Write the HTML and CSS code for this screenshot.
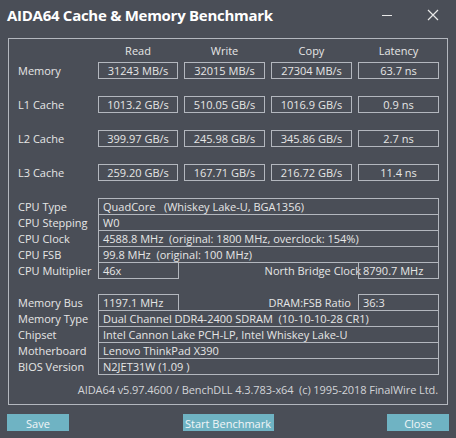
FILE: index.html
```html
<!DOCTYPE html>
<html>
<head>
<meta charset="utf-8">
<link rel="stylesheet" href="styles.css">
</head>
<body>
<div class="titlebar">
  <span class="title">AIDA64 Cache &amp; Memory Benchmark</span>
  <div class="controls">
    <svg class="ctl-min" width="12" height="12" viewBox="0 0 12 12"><line x1="1" y1="6.5" x2="11" y2="6.5" stroke="#e8e8e8" stroke-width="1"/></svg>
    <svg class="ctl-close" width="12" height="12" viewBox="0 0 12 12"><path d="M1 1 L11 11 M11 1 L1 11" stroke="#e8e8e8" stroke-width="1.2" fill="none"/></svg>
  </div>
</div>
<div class="frame">
  <div class="bench-head">
    <span></span><span>Read</span><span>Write</span><span>Copy</span><span>Latency</span>
  </div>
  <div class="bench">
    <span class="lbl">Memory</span><span class="box">31243 MB/s</span><span class="box">32015 MB/s</span><span class="box">27304 MB/s</span><span class="box">63.7 ns</span>
    <span class="lbl">L1 Cache</span><span class="box">1013.2 GB/s</span><span class="box">510.05 GB/s</span><span class="box">1016.9 GB/s</span><span class="box">0.9 ns</span>
    <span class="lbl">L2 Cache</span><span class="box">399.97 GB/s</span><span class="box">245.98 GB/s</span><span class="box">345.86 GB/s</span><span class="box">2.7 ns</span>
    <span class="lbl">L3 Cache</span><span class="box">259.20 GB/s</span><span class="box">167.71 GB/s</span><span class="box">216.72 GB/s</span><span class="box">11.4 ns</span>
  </div>
  <div class="info cpu">
    <div class="row"><span class="lbl">CPU Type</span><span class="val wide">QuadCore &nbsp; (Whiskey Lake-U, BGA1356)</span></div>
    <div class="row"><span class="lbl">CPU Stepping</span><span class="val wide">W0</span></div>
    <div class="row"><span class="lbl">CPU Clock</span><span class="val wide">4588.8 MHz &nbsp;(original: 1800 MHz, overclock: 154%)</span></div>
    <div class="row"><span class="lbl">CPU FSB</span><span class="val wide">99.8 MHz &nbsp;(original: 100 MHz)</span></div>
    <div class="row"><span class="lbl">CPU Multiplier</span><span class="val short">46x</span><span class="lbl2 nb">North Bridge Clock</span><span class="val short2">8790.7 MHz</span></div>
  </div>
  <div class="info mem">
    <div class="row"><span class="lbl">Memory Bus</span><span class="val short">1197.1 MHz</span><span class="lbl2">DRAM:FSB Ratio</span><span class="val short2">36:3</span></div>
    <div class="row"><span class="lbl">Memory Type</span><span class="val wide">Dual Channel DDR4-2400 SDRAM &nbsp;(10-10-10-28 CR1)</span></div>
    <div class="row"><span class="lbl">Chipset</span><span class="val wide">Intel Cannon Lake PCH-LP, Intel Whiskey Lake-U</span></div>
    <div class="row"><span class="lbl">Motherboard</span><span class="val wide">Lenovo ThinkPad X390</span></div>
    <div class="row"><span class="lbl">BIOS Version</span><span class="val wide">N2JET31W (1.09 )</span></div>
  </div>
  <div class="footer">AIDA64 v5.97.4600 / BenchDLL 4.3.783-x64 &nbsp;(c) 1995-2018 FinalWire Ltd.</div>
</div>
<div class="buttons">
  <button class="btn btn-save">Save</button>
  <button class="btn btn-start">Start Benchmark</button>
  <button class="btn btn-close">Close</button>
</div>
<div class="strip"></div>
</body>
</html>
```
FILE: styles.css
```css
* { box-sizing: border-box; }
html, body {
  margin: 0;
  padding: 0;
  background: #4a4e57;
  width: 456px;
  height: 438px;
  overflow: hidden;
  font-family: "Open Sans", "Noto Sans", sans-serif;
  font-size: 11px;
  color: #e6e6e6;
}
.titlebar {
  height: 38px;
  display: flex;
  align-items: flex-start;
  justify-content: space-between;
  padding: 4px 0 0 7px;
}
.title {
  font-weight: 700;
  font-size: 15px;
  line-height: 22px;
  color: #ffffff;
  letter-spacing: -0.28px;
}
.controls {
  display: flex;
  align-items: center;
  padding-top: 5px;
}
.ctl-min { margin-right: 34px; }
.ctl-close { margin-right: 17px; }
.frame {
  margin-left: 8px;
  width: 440px;
  border: 1px solid #b3b7be;
  padding: 0 8px 0 9px;
}
.bench-head, .bench {
  display: grid;
  grid-template-columns: 74px 80px 81px 81px 81px;
  column-gap: 6px;
}
.bench-head {
  margin-top: 4px;
  height: 16px;
  line-height: 16px;
  text-align: center;
}
.bench {
  margin-top: 3px;
  row-gap: 17px;
}
.lbl {
  line-height: 17px;
  white-space: nowrap;
}
.box {
  height: 17px;
  border: 1px solid #b3b7be;
  text-align: center;
  line-height: 15px;
  white-space: nowrap;
}
.info {
  display: flex;
  flex-direction: column;
}
.cpu { margin-top: 17px; }
.mem { margin-top: 15px; }
.row {
  display: flex;
  height: 17px;
}
.row + .row { margin-top: -1px; }
.row .lbl { width: 80px; flex: none; }
.val {
  height: 17px;
  border: 1px solid #b3b7be;
  line-height: 15px;
  padding-left: 4px;
  white-space: nowrap;
  overflow: hidden;
}
.wide { width: 341px; }
.short { width: 81px; }
.short2 { width: 81px; flex: none; }
.lbl2 {
  flex: 1;
  text-align: right;
  line-height: 17px;
  padding-right: 7px;
  white-space: nowrap;
}
.lbl2.nb { padding-right: 0; margin-right: -3px; }
.footer {
  margin-top: 8px;
  height: 21px;
  line-height: 14px;
  text-align: right;
  color: #d2d4d8;
  padding-right: 1px;
  letter-spacing: -0.08px;
}
.buttons {
  display: flex;
  justify-content: space-between;
  padding: 0 7px;
  margin-top: 9px;
}
.btn {
  height: 17px;
  border: none;
  background: #6fb3c3;
  color: #f2f6f8;
  font-family: "Open Sans", "Noto Sans", sans-serif;
  font-size: 11px;
  line-height: 17px;
  padding: 0;
  padding-top: 1px;
}
.btn-save, .btn-close { width: 62px; }
.btn-start { width: 91px; }
.strip {
  margin-top: 8px;
  height: 6px;
  background: #5b6270;
}
```
